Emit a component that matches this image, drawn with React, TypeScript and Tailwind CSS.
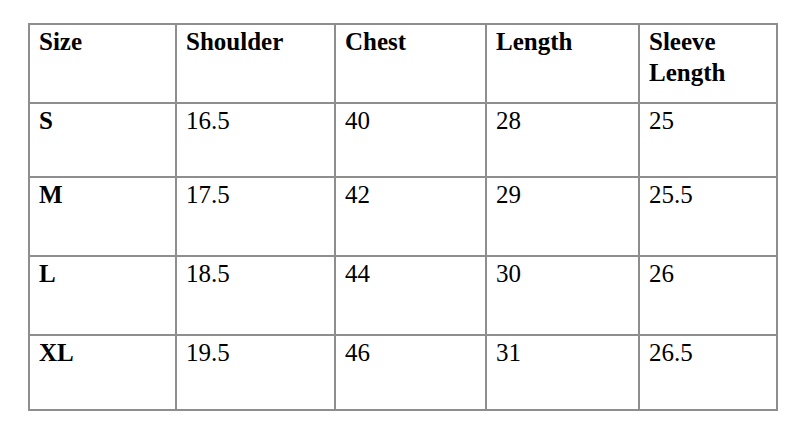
const headers = ["Size", "Shoulder", "Chest", "Length", "Sleeve Length"]

const rows = [
  ["S", "16.5", "40", "28", "25"],
  ["M", "17.5", "42", "29", "25.5"],
  ["L", "18.5", "44", "30", "26"],
  ["XL", "19.5", "46", "31", "26.5"],
]

export default function App() {
  return (
    <div className="min-h-[444px] w-[800px] bg-white pt-[23px] pl-[28px] font-['Liberation_Serif',serif] text-[25px] leading-[31px] text-black">
      <div className="grid w-max grid-cols-[145px_157px_149px_151px_136px] grid-rows-[77px_72px_77px_77px_73px] gap-[2px] bg-[#8e8e8e] p-[2px]">
        {headers.map((h) => (
          <div key={h} className="bg-white pt-[1px] pl-[9px] pr-[6px] font-bold">
            {h}
          </div>
        ))}
        {rows.map((row) =>
          row.map((cell, i) => (
            <div key={row[0] + i} className={`bg-white pt-[1px] pl-[9px] ${i === 0 ? "font-bold" : ""}`}>
              {cell}
            </div>
          ))
        )}
      </div>
    </div>
  )
}
